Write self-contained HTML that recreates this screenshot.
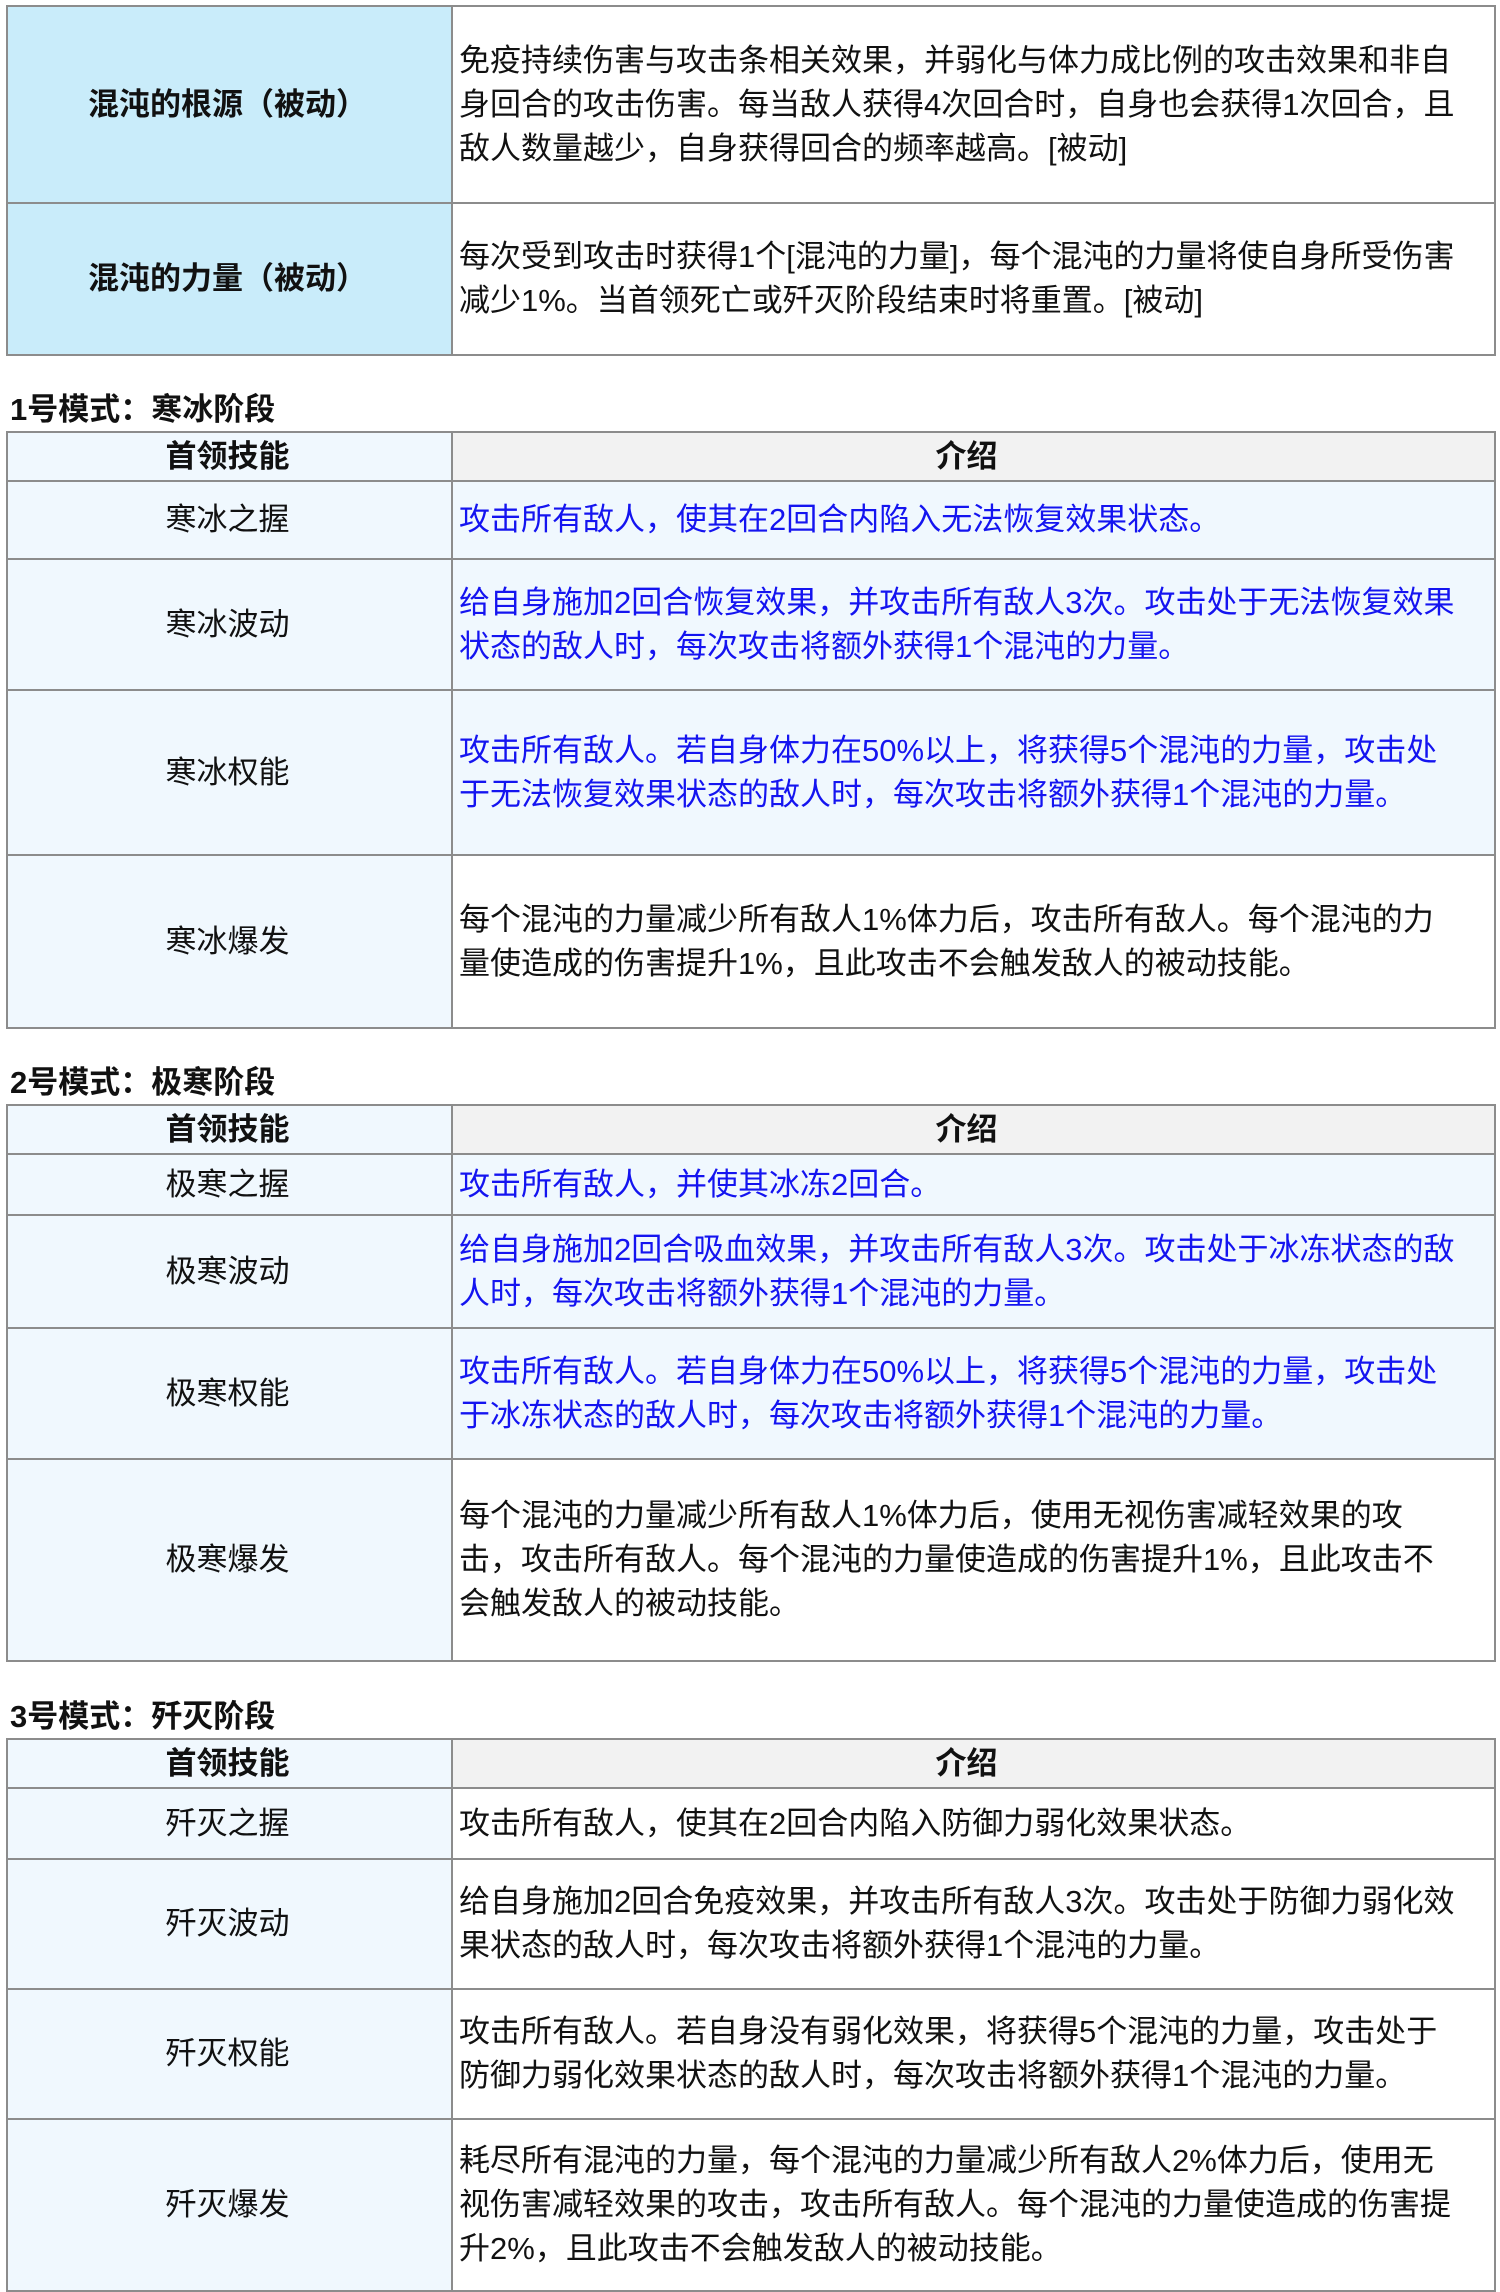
<!DOCTYPE html>
<html><head><meta charset="utf-8"><style>
body{margin:0;width:1500px;height:2292px;background:#fff;position:relative;font-family:"Liberation Sans","Noto Sans CJK SC",sans-serif;color:#111;overflow:hidden}
table{position:absolute;left:6px;width:1490px;border-collapse:collapse;table-layout:fixed}
td,th{border:2px solid #8c8c8c;font-size:31px;line-height:44px;padding:0 20px 0 6px;vertical-align:middle}
td.l,th.l{width:439px;text-align:center;padding:0 4px 0 0;background:#f0f8fe}
th{background:#f2f2f2;font-weight:bold;text-align:center}
.p td.l{background:#c9ecfa;font-weight:bold}
.p td{background:#fff}
td.r{background:#fff}
td.b{color:#1414f0;background:#f0f8fe}
td.n{padding-right:51px}
.h{position:absolute;left:10px;font-size:31px;font-weight:bold;line-height:40px}
</style></head><body>
<table class="p" style="top:5px">
<tr style="height:197px"><td class="l">混沌的根源（被动）</td><td>免疫持续伤害与攻击条相关效果，并弱化与体力成比例的攻击效果和非自身回合的攻击伤害。每当敌人获得4次回合时，自身也会获得1次回合，且敌人数量越少，自身获得回合的频率越高。[被动]</td></tr>
<tr style="height:152px"><td class="l">混沌的力量（被动）</td><td>每次受到攻击时获得1个[混沌的力量]，每个混沌的力量将使自身所受伤害减少1%。当首领死亡或歼灭阶段结束时将重置。[被动]</td></tr>
</table>
<div class="h" style="top:390px">1号模式：寒冰阶段</div>
<table style="top:431px">
<tr style="height:49px"><th class="l">首领技能</th><th>介绍</th></tr>
<tr style="height:78px"><td class="l">寒冰之握</td><td class="b">攻击所有敌人，使其在2回合内陷入无法恢复效果状态。</td></tr>
<tr style="height:131px"><td class="l">寒冰波动</td><td class="b">给自身施加2回合恢复效果，并攻击所有敌人3次。攻击处于无法恢复效果状态的敌人时，每次攻击将额外获得1个混沌的力量。</td></tr>
<tr style="height:165px"><td class="l">寒冰权能</td><td class="b n">攻击所有敌人。若自身体力在50%以上，将获得5个混沌的力量，攻击处于无法恢复效果状态的敌人时，每次攻击将额外获得1个混沌的力量。</td></tr>
<tr style="height:173px"><td class="l">寒冰爆发</td><td class="r n">每个混沌的力量减少所有敌人1%体力后，攻击所有敌人。每个混沌的力量使造成的伤害提升1%，且此攻击不会触发敌人的被动技能。</td></tr>
</table>
<div class="h" style="top:1063px">2号模式：极寒阶段</div>
<table style="top:1104px">
<tr style="height:49px"><th class="l">首领技能</th><th>介绍</th></tr>
<tr style="height:61px"><td class="l">极寒之握</td><td class="b">攻击所有敌人，并使其冰冻2回合。</td></tr>
<tr style="height:113px"><td class="l">极寒波动</td><td class="b">给自身施加2回合吸血效果，并攻击所有敌人3次。攻击处于冰冻状态的敌人时，每次攻击将额外获得1个混沌的力量。</td></tr>
<tr style="height:131px"><td class="l">极寒权能</td><td class="b n">攻击所有敌人。若自身体力在50%以上，将获得5个混沌的力量，攻击处于冰冻状态的敌人时，每次攻击将额外获得1个混沌的力量。</td></tr>
<tr style="height:202px"><td class="l">极寒爆发</td><td class="r" style="padding-right:36px">每个混沌的力量减少所有敌人1%体力后，使用无视伤害减轻效果的攻击，攻击所有敌人。每个混沌的力量使造成的伤害提升1%，且此攻击不会触发敌人的被动技能。</td></tr>
</table>
<div class="h" style="top:1697px">3号模式：歼灭阶段</div>
<table style="top:1738px">
<tr style="height:49px"><th class="l">首领技能</th><th>介绍</th></tr>
<tr style="height:71px"><td class="l">歼灭之握</td><td class="r">攻击所有敌人，使其在2回合内陷入防御力弱化效果状态。</td></tr>
<tr style="height:130px"><td class="l">歼灭波动</td><td class="r">给自身施加2回合免疫效果，并攻击所有敌人3次。攻击处于防御力弱化效果状态的敌人时，每次攻击将额外获得1个混沌的力量。</td></tr>
<tr style="height:130px"><td class="l">歼灭权能</td><td class="r n">攻击所有敌人。若自身没有弱化效果，将获得5个混沌的力量，攻击处于防御力弱化效果状态的敌人时，每次攻击将额外获得1个混沌的力量。</td></tr>
<tr style="height:172px"><td class="l">歼灭爆发</td><td class="r">耗尽所有混沌的力量，每个混沌的力量减少所有敌人2%体力后，使用无<br>视伤害减轻效果的攻击，攻击所有敌人。每个混沌的力量使造成的伤害提升2%，且此攻击不会触发敌人的被动技能。</td></tr>
</table>
</body></html>
